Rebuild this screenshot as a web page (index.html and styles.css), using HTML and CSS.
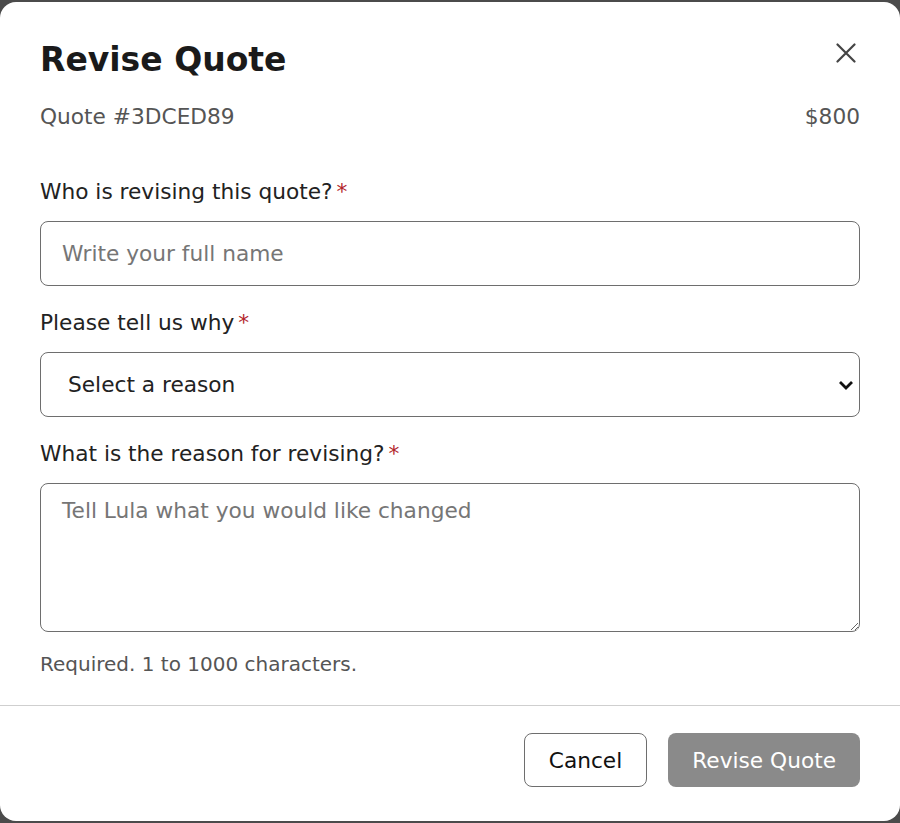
FILE: index.html
```html
<!DOCTYPE html>
<html lang="en">
<head>
    <meta charset="UTF-8">
    <title>Revise Quote</title>
    <link rel="stylesheet" href="styles.css">
</head>
<body>

    <!-- Modal -->
    <div class="modal">
        <div class="modal-body">
            <!-- Header -->
            <div class="modal-header">
                <h1>Revise Quote</h1>
                <button class="close" type="button" aria-label="Close">
                    <svg width="20" height="20" viewBox="0 0 20 20">
                        <path d="M1.5 1.5 L18.5 18.5 M18.5 1.5 L1.5 18.5" stroke="#444" stroke-width="2.2" stroke-linecap="round" fill="none"/>
                    </svg>
                </button>
            </div>

            <div class="quote-info">
                <span>Quote #3DCED89</span>
                <span>$800</span>
            </div>

            <form id="form">
                <!-- Name -->
                <div class="form-group">
                    <label for="fullname">Who is revising this quote?<span class="req">*</span></label>
                    <input type="text" id="fullname" name="fullname" placeholder="Write your full name">
                </div>

                <!-- Reason select -->
                <div class="form-group">
                    <label for="reason">Please tell us why<span class="req">*</span></label>
                    <div class="select-wrap">
                        <select id="reason" name="reason">
                            <option>Select a reason</option>
                        </select>
                        <svg class="chevron" width="16" height="10" viewBox="0 0 16 10">
                            <path d="M2 2 L8 8 L14 2" stroke="#111" stroke-width="2.8" fill="none"/>
                        </svg>
                    </div>
                </div>

                <!-- Details -->
                <div class="form-group">
                    <label for="details">What is the reason for revising?<span class="req">*</span></label>
                    <textarea id="details" name="details" placeholder="Tell Lula what you would like changed"></textarea>
                    <div class="hint">Required. 1 to 1000 characters.</div>
                </div>
            </form>
        </div>

        <!-- Footer -->
        <div class="modal-footer">
            <button type="button" class="btn btn-outline">Cancel</button>
            <button type="submit" class="btn btn-primary" disabled>Revise Quote</button>
        </div>
    </div>

</body>
</html>
```

FILE: styles.css
```css
body {
    margin: 0;
    padding: 2px 0;
    background-color: #4b4b4b;
    font-family: 'DejaVu Sans', sans-serif;
    color: #222;
}

.modal {
    background: #fff;
    border-radius: 16px;
    height: 819px;
    box-sizing: border-box;
    display: flex;
    flex-direction: column;
}

.modal-body {
    padding: 37px 40px 0 40px;
}

.modal-header {
    display: flex;
    justify-content: space-between;
    align-items: flex-start;
}

h1 {
    margin: 0;
    font-size: 33px;
    font-weight: bold;
    color: #1a1a1a;
    line-height: 41px;
}

.close {
    background: none;
    border: none;
    padding: 0;
    margin: 4px 4px 0 0;
    cursor: pointer;
}

.quote-info {
    display: flex;
    justify-content: space-between;
    margin-top: 21px;
    font-size: 21.7px;
    line-height: 31px;
    color: #555;
}

form {
    margin-top: 44px;
}

.form-group {
    margin-bottom: 21px;
}

label {
    display: block;
    font-size: 21.7px;
    line-height: 31px;
    margin-bottom: 14px;
    color: #222;
}

.req {
    color: #b3262b;
    margin-left: 4px;
}

input[type="text"],
select,
textarea {
    width: 100%;
    box-sizing: border-box;
    border: 1.5px solid #6e6e6e;
    border-radius: 8px;
    font-family: 'DejaVu Sans', sans-serif;
    font-size: 21.7px;
    color: #222;
    background: #fff;
}

input[type="text"] {
    height: 65px;
    padding: 0 21px;
}

input::placeholder,
textarea::placeholder {
    color: #767676;
    opacity: 1;
}

.select-wrap {
    position: relative;
}

select {
    height: 65px;
    padding: 0 27px;
    appearance: none;
    -webkit-appearance: none;
}

.chevron {
    position: absolute;
    right: 6px;
    top: 28px;
    pointer-events: none;
}

textarea {
    display: block;
    height: 149px;
    padding: 14px 21px;
    resize: vertical;
}

.hint {
    margin-top: 18px;
    font-size: 20px;
    line-height: 28px;
    color: #555;
}

.modal-footer {
    margin-top: auto;
    border-top: 1px solid #cfcfcf;
    padding: 27px 40px 34px 40px;
    display: flex;
    justify-content: flex-end;
    gap: 21px;
}

.btn {
    height: 54px;
    border-radius: 8px;
    font-family: 'DejaVu Sans', sans-serif;
    font-size: 21.7px;
    padding: 0 24px;
    cursor: pointer;
}

.btn-outline {
    background: #fff;
    border: 1.5px solid #6e6e6e;
    color: #111;
}

.btn-primary {
    background: #8a8a8a;
    border: none;
    color: #fff;
}
```
